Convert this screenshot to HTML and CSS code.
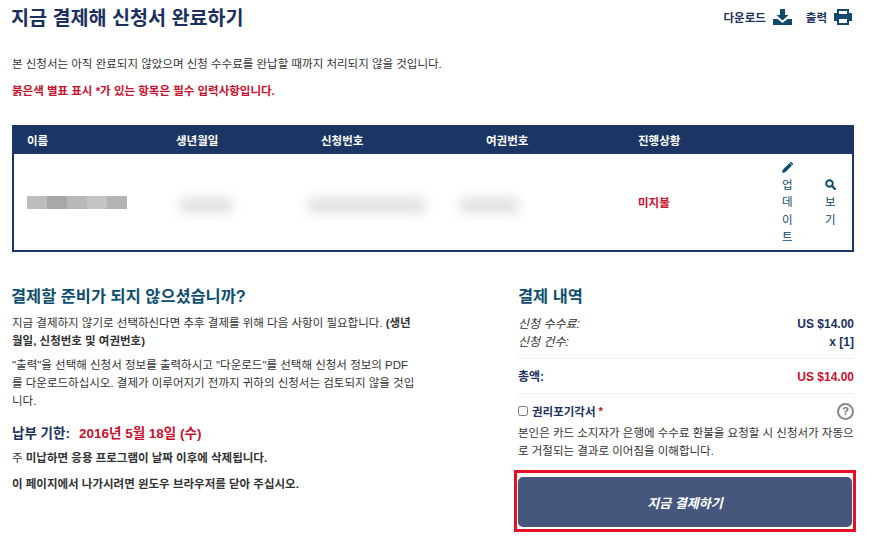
FILE: index.html
```html
<!DOCTYPE html>
<html lang="ko">
<head>
<meta charset="utf-8">
<title>지금 결제해 신청서 완료하기</title>
<link rel="stylesheet" href="styles.css">
</head>
<body>
<div class="page">
  <header class="top">
    <h1 class="title">지금 결제해 신청서 완료하기</h1>
    <div class="tools">
      <span class="tool">다운로드
        <svg class="tool-icon" width="19" height="16" viewBox="0 0 19 16"><path d="M7 0h5v6h3.5L9.5 11.5 3.500 6H7z"/><path d="M0 10h4.500l5 4 5-4H19v6H0z"/></svg>
      </span>
      <span class="tool tool-print">출력
        <svg class="tool-icon" width="18" height="16" viewBox="0 0 18 16"><path d="M3 0h12v4h2.500a.5.5 0 0 1 .5.500V12h-3v4H3v-4H0V4.500A.5.5 0 0 1 .5 4H3zM5 2v3h8V2zM5 10v4h8v-4z" fill-rule="evenodd"/></svg>
      </span>
    </div>
  </header>
  <p class="notice">본 신청서는 아직 완료되지 않았으며 신청 수수료를 완납할 때까지 처리되지 않을 것입니다.</p>
  <p class="required">붉은색 별표 표시 *가 있는 항목은 필수 입력사항입니다.</p>

  <div class="table">
    <div class="thead">
      <span>이름</span><span>생년월일</span><span>신청번호</span><span>여권번호</span><span>진행상황</span>
    </div>
    <div class="tbody">
      <div class="pixels"><i class="p1"></i><i class="p2"></i><i class="p3"></i><i class="p4"></i><i class="p5"></i></div>
      <div><div class="blur blur-dob"></div></div>
      <div><div class="blur blur-app"></div></div>
      <div><div class="blur blur-pass"></div></div>
      <div class="status">미지불</div>
      <div class="actions">
        <a class="action action-update">
          <svg width="11" height="11" viewBox="0 0 11 11"><path d="M0 11l.8-3.200L7.600 1 10 3.400 3.200 10.200zM8.300.3a1 1 0 0 1 1.400 0l1 1a1 1 0 0 1 0 1.400l-.4.4L7.900.7z"/></svg>
          <span>업데이트</span>
        </a>
        <a class="action action-view">
          <svg width="11" height="11" viewBox="0 0 11 11"><circle cx="4.500" cy="4.500" r="3.300" fill="none" stroke="#0e4a6e" stroke-width="1.900"/><path d="M6.800 6.800l3.200 3.200" stroke="#0e4a6e" stroke-width="2.200" stroke-linecap="round"/></svg>
          <span>보기</span>
        </a>
      </div>
    </div>
  </div>

  <div class="columns">
    <section class="left">
      <h2 class="heading">결제할 준비가 되지 않으셨습니까?</h2>
      <p class="para">지금 결제하지 않기로 선택하신다면 추후 결제를 위해 다음 사항이 필요합니다. <b>(생년</b><br><b>월일, 신청번호 및 여권번호)</b></p>
      <p class="para">"출력"을 선택해 신청서 정보를 출력하시고 "다운로드"를 선택해 신청서 정보의 PDF를 다운로드하십시오. 결제가 이루어지기 전까지 귀하의 신청서는 검토되지 않을 것입니다.</p>
      <div class="due"><span class="due-label">납부 기한:</span><span class="due-date">2016년 5월 18일 (수)</span></div>
      <p class="para-tight">주 <b>미납하면 응용 프로그램이 날짜 이후에 삭제됩니다.</b></p>
      <p class="para-bold">이 페이지에서 나가시려면 윈도우 브라우저를 닫아 주십시오.</p>
    </section>
    <aside class="right">
      <h2 class="heading">결제 내역</h2>
      <div class="fee-rows">
        <div class="row"><em>신청 수수료:</em><b>US $14.00</b></div>
        <div class="row"><em>신청 건수:</em><b>x [1]</b></div>
      </div>
      <div class="row total"><b>총액:</b><b class="red">US $14.00</b></div>
      <div class="waiver">
        <label class="check"><input type="checkbox"><b>권리포기각서</b><span class="star">*</span></label>
        <span class="help">?</span>
      </div>
      <p class="terms">본인은 카드 소지자가 은행에 수수료 환불을 요청할 시 신청서가 자동으로 거절되는 결과로 이어짐을 이해합니다.</p>
      <div class="pay-frame"><button class="pay" type="button">지금 결제하기</button></div>
    </aside>
  </div>
</div>
</body>
</html>
```
FILE: styles.css
```css
* { box-sizing: border-box; }
html, body { margin: 0; padding: 0; background: #fff; }
body {
  width: 872px;
  height: 546px;
  overflow: hidden;
  font-family: "Liberation Sans", "Noto Sans CJK KR", sans-serif;
  font-size: 11.5px;
  color: #333;
}
.page { padding: 0 18px 0 12px; }
p { margin: 0; }
.top { display: flex; justify-content: space-between; align-items: flex-start; height: 56px; padding-top: 3px; }
.title { margin: 0 0 0 -1px; font-size: 19.6px; line-height: 30px; color: #1b3060; font-weight: 700; }
.tools { display: flex; gap: 14px; padding: 6px 2px 0 0; }
.tool { display: flex; align-items: center; gap: 7px; font-size: 11.5px; font-weight: 700; color: #1b3060; }
.tool-icon { fill: #0e4a6e; display: block; }
.notice { line-height: 16px; }
.required { margin-top: 11px; line-height: 16px; color: #c8102e; font-weight: 700; }

.table { margin-top: 26px; border: 2px solid #1b3564; border-top: 0; }
.thead, .tbody {
  display: grid;
  grid-template-columns: 149px 145px 165px 152px 130px 1fr;
  padding-left: 13px;
}
.thead { height: 29px; margin: 0 -2px; padding-left: 15px; background: #1b3564; color: #fff; font-weight: 700; align-items: center; }
.tbody { height: 96px; align-items: center; }
.pixels { display: flex; width: 100px; height: 13px; }
.pixels i { flex: 1; }
.p1 { background: #bdbdbd; }
.p2 { background: #a8a8a8; }
.p3 { background: #b8b8b8; }
.p4 { background: #c4c4c4; }
.p5 { background: #b4b4b4; }
.blur { height: 15px; margin-top: 6px; background: #dfdfdf; filter: blur(6px); }
.blur-dob { width: 52px; margin-left: 4px; }
.blur-app { width: 117px; margin-left: -13px; }
.blur-pass { width: 58px; margin-left: -26px; }
.status { color: #c8102e; font-weight: 700; }
.actions { display: flex; align-items: center; gap: 33px; padding: 4px 0 0 14px; }
.action { width: 10px; display: flex; flex-direction: column; align-items: flex-start; color: #0e4a6e; line-height: 17.3px; word-break: break-all; }
.action svg { fill: #0e4a6e; margin-bottom: 4px; display: block; }
.action span { width: 13px; }

.columns { display: flex; justify-content: space-between; margin-top: 33px; }
.left { width: 404px; }
.right { width: 336px; }
.heading { margin: 0 0 0 -1px; font-size: 16.4px; line-height: 22px; color: #0e4f6f; font-weight: 700; }
.right .heading { margin-left: 0; }
.para { margin-top: 7px; line-height: 18px; }
.left .para { word-break: break-all; }
.left .para + .para { margin-top: 6px; }
.due { margin-top: 14px; font-size: 13.5px; font-weight: 700; line-height: 20px; color: #1b3060; display: flex; gap: 9px; }
.due-date { color: #c8102e; }
.para-tight { margin-top: 5px; line-height: 18px; }
.para-bold { margin-top: 8px; line-height: 18px; font-weight: 700; }
.fee-rows { margin-top: 8px; padding-bottom: 7px; border-bottom: 1px solid #eee; }
.row { display: flex; justify-content: space-between; line-height: 18px; color: #1b3060; font-size: 12px; }
.row em { color: #333; }
.total { height: 35px; padding-top: 9px; border-bottom: 1px solid #eee; }
.red { color: #c8102e; }
.waiver { display: flex; justify-content: space-between; align-items: center; margin-top: 7px; height: 20px; }
.check { display: flex; align-items: center; color: #1b3060; }
.check input { margin: 0 4px 0 0; width: 10px; height: 10px; }
.star { color: #c8102e; font-weight: 700; margin-left: 3px; }
.help { width: 17px; height: 17px; border: 2px solid #888; border-radius: 50%; color: #777; font-size: 11.5px; font-weight: 700; display: flex; align-items: center; justify-content: center; }
.terms { margin-top: 3px; line-height: 18px; word-break: break-all; }
.pay-frame { margin: 10px -2px 0 -4px; width: 342px; height: 62px; border: 3px solid #e60f25; padding: 4px 1px 2px; }
.pay { display: block; width: 100%; height: 100%; padding: 0; border: 0; border-radius: 5px; background: #45577c; color: #fff; font: italic 700 13px "Liberation Sans", "Noto Sans CJK KR", sans-serif; }
```
